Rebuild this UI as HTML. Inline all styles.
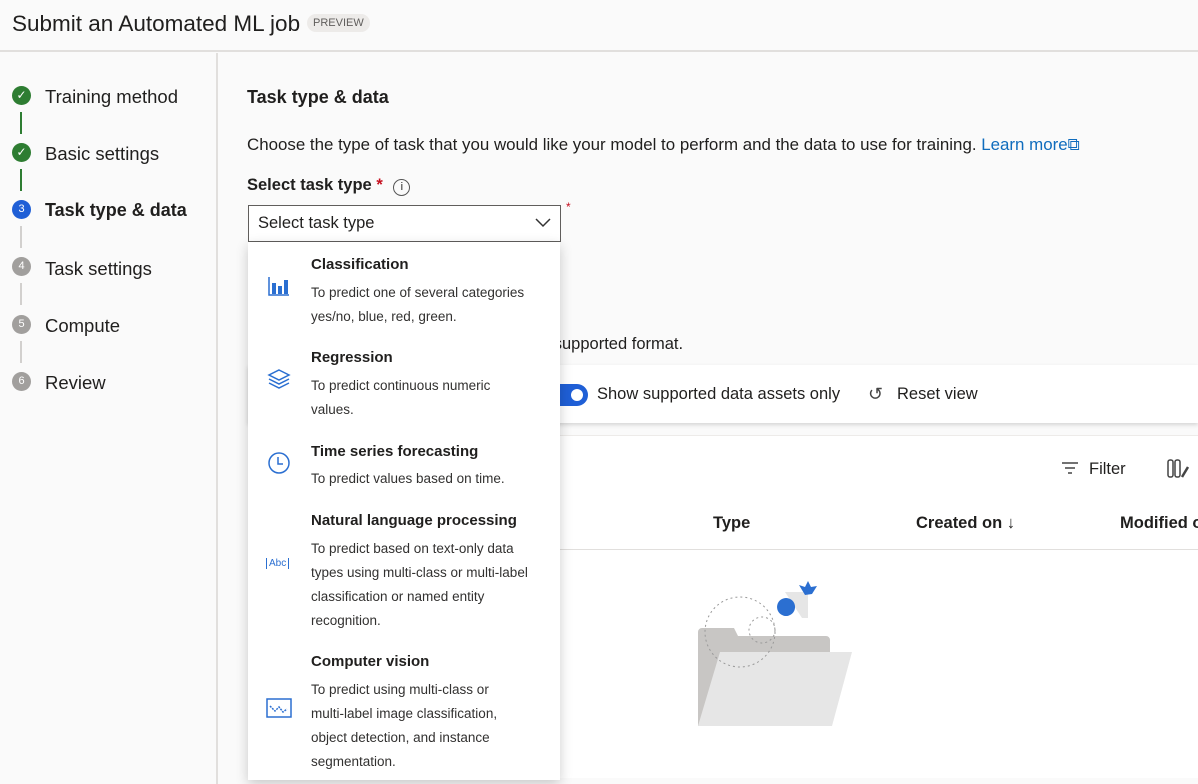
<!DOCTYPE html>
<html><head><style>
*{margin:0;padding:0;box-sizing:border-box}
body{width:1198px;height:784px;overflow:hidden;font-family:"Liberation Sans",sans-serif;color:#201f1e;background:#fafafa;position:relative}
.a{position:absolute}
.t{position:absolute;left:311px;font-weight:bold;font-size:15px;white-space:nowrap}
.d{position:absolute;left:311px;width:228px;font-size:13.5px;line-height:24px;color:#323130}
</style></head><body>
<div class="a" style="left:0;top:0;width:1198px;height:52px;background:#fafafa;border-bottom:2px solid #e1dfdd"></div>
<div class="a" style="left:12px;top:11px;font-size:22.5px;">Submit an Automated ML job</div>
<div class="a" style="left:307px;top:14px;background:#edebe9;border-radius:10px;padding:3px 6px;font-size:11px;color:#605e5c;">PREVIEW</div>
<div class="a" style="left:0;top:53px;width:218px;height:731px;background:#fafafa;border-right:2px solid #e1dfdd"></div>
<div class="a" style="left:12px;top:86px;width:19px;height:19px;border-radius:50%;background:#2e7d32;color:#fff;font-size:12px;text-align:center;line-height:19px">✓</div>
<div class="a" style="left:20px;top:112px;width:2px;height:22px;background:#2e7d32"></div>
<div class="a" style="left:12px;top:143px;width:19px;height:19px;border-radius:50%;background:#2e7d32;color:#fff;font-size:12px;text-align:center;line-height:19px">✓</div>
<div class="a" style="left:20px;top:169px;width:2px;height:22px;background:#2e7d32"></div>
<div class="a" style="left:12px;top:200px;width:19px;height:19px;border-radius:50%;background:#1f5fd6;color:#fff;font-size:11px;text-align:center;line-height:19px">3</div>
<div class="a" style="left:20px;top:226px;width:2px;height:22px;background:#d2d0ce"></div>
<div class="a" style="left:12px;top:257px;width:19px;height:19px;border-radius:50%;background:#a19f9d;color:#fff;font-size:11px;text-align:center;line-height:19px">4</div>
<div class="a" style="left:20px;top:283px;width:2px;height:22px;background:#d2d0ce"></div>
<div class="a" style="left:12px;top:315px;width:19px;height:19px;border-radius:50%;background:#a19f9d;color:#fff;font-size:11px;text-align:center;line-height:19px">5</div>
<div class="a" style="left:20px;top:341px;width:2px;height:22px;background:#d2d0ce"></div>
<div class="a" style="left:12px;top:372px;width:19px;height:19px;border-radius:50%;background:#a19f9d;color:#fff;font-size:11px;text-align:center;line-height:19px">6</div>
<div class="a" style="left:45px;top:86px;font-size:18.5px">Training method</div>
<div class="a" style="left:45px;top:143px;font-size:18.5px">Basic settings</div>
<div class="a" style="left:45px;top:200px;font-size:18px;font-weight:bold">Task type &amp; data</div>
<div class="a" style="left:45px;top:258px;font-size:18.5px">Task settings</div>
<div class="a" style="left:45px;top:315px;font-size:18.5px">Compute</div>
<div class="a" style="left:45px;top:372px;font-size:18.5px">Review</div>
<div class="a" style="left:247px;top:87px;font-size:18px;font-weight:bold">Task type &amp; data</div>
<div class="a" style="left:247px;top:135px;font-size:16.9px;white-space:nowrap">Choose the type of task that you would like your model to perform and the data to use for training. <span style="color:#0f6cbd">Learn more⧉</span></div>
<div class="a" style="left:247px;top:176px;font-size:16.5px;font-weight:bold">Select task type <span style="color:#c50f1f">*</span> <span style="display:inline-block;width:17px;height:17px;border:1.5px solid #555;border-radius:50%;font-size:11px;text-align:center;line-height:14px;font-weight:normal;margin-left:6px">i</span></div>
<div class="a" style="left:248px;top:205px;width:313px;height:37px;border:1.5px solid #605e5c;background:#fff;font-size:16.5px;padding:8px 9px">Select task type
<svg class="a" style="right:9px;top:12px" width="16" height="10"><path d="M1 1l7 7 7-7" stroke="#333" fill="none" stroke-width="1.5"/></svg></div>
<div class="a" style="left:566px;top:200px;color:#c50f1f;font-size:12px">*</div>
<div class="a" style="left:540px;top:335px;font-size:16.5px">n supported format.</div>
<div class="a" style="left:248px;top:365px;width:950px;height:58px;background:#fff;box-shadow:0 2px 4px rgba(0,0,0,.15)"></div>
<div class="a" style="left:540px;top:384px;width:48px;height:22px;border-radius:11px;background:#1f5fd6"><div class="a" style="right:5px;top:5px;width:12px;height:12px;border-radius:50%;background:#fff"></div></div>
<div class="a" style="left:597px;top:385px;font-size:16.5px">Show supported data assets only</div>
<div class="a" style="left:868px;top:384px;font-size:18px;color:#444">↺</div>
<div class="a" style="left:897px;top:385px;font-size:16.5px">Reset view</div>
<div class="a" style="left:248px;top:435px;width:950px;height:343px;background:#fff;border-top:1px solid #edebe9"></div>
<svg class="a" style="left:1061px;top:461px" width="18" height="14"><path d="M1 2h16M4 7h10M7 12h4" stroke="#444" stroke-width="1.5"/></svg>
<div class="a" style="left:1089px;top:460px;font-size:16.5px">Filter</div>
<svg class="a" style="left:1167px;top:459px" width="24" height="20"><rect x="1" y="1" width="5" height="17" rx="2" fill="none" stroke="#444" stroke-width="1.5"/><rect x="8" y="1" width="5" height="17" rx="2" fill="none" stroke="#444" stroke-width="1.5"/><path d="M15 18l6-10" stroke="#444" stroke-width="2.5"/></svg>
<div class="a" style="left:248px;top:549px;width:950px;height:1px;background:#e1dfdd"></div>
<div class="a" style="left:713px;top:514px;font-size:16.5px;font-weight:bold">Type</div>
<div class="a" style="left:916px;top:514px;font-size:16.5px;font-weight:bold">Created on <span style="font-weight:normal">↓</span></div>
<div class="a" style="left:1120px;top:514px;font-size:16.5px;font-weight:bold;white-space:nowrap">Modified o</div>
<svg class="a" style="left:690px;top:570px" width="170" height="160">
<path d="M8 62a4 4 0 0 1 4-4h32l4 8h88a4 4 0 0 1 4 4v86H8z" fill="#c8c6c4"/>
<path d="M30 82h132l-20 74H8z" fill="#e6e6e6"/>
<circle cx="50" cy="62" r="35" fill="none" stroke="#999" stroke-dasharray="2 3"/>
<circle cx="72" cy="60" r="13" fill="none" stroke="#999" stroke-dasharray="2 3"/>
<path d="M95 22h23v26h-6z" fill="#e6e6e6"/>
<path d="M96 28a9 9 0 1 0 0.1 0z" fill="#2b6fd1"/>
<path d="M115 25l-6-10 6 2 3-6 3 6 6-1-5 8z" fill="#2b6fd1"/>
</svg>
<div class="a" style="left:248px;top:242px;width:312px;height:538px;background:#fff;box-shadow:0 4px 12px rgba(0,0,0,.2)"></div>
<div class="t" style="top:256px">Classification</div>
<div class="d" style="top:281px">To predict one of several categories yes/no, blue, red, green.</div>
<div class="t" style="top:349px">Regression</div>
<div class="d" style="top:374px;width:215px">To predict continuous numeric values.</div>
<div class="t" style="top:443px">Time series forecasting</div>
<div class="d" style="top:467px">To predict values based on time.</div>
<div class="t" style="top:512px">Natural language processing</div>
<div class="d" style="top:537px;width:225px">To predict based on text-only data types using multi-class or multi-label classification or named entity recognition.</div>
<div class="t" style="top:653px">Computer vision</div>
<div class="d" style="top:678px;width:210px">To predict using multi-class or multi-label image classification, object detection, and instance segmentation.</div>
<svg class="a" style="left:267px;top:275px" width="24" height="22"><path d="M2 2v18h20" stroke="#2b6fd1" stroke-width="1.5" fill="none"/><rect x="5" y="8" width="4" height="11" fill="#2b6fd1"/><rect x="11" y="11" width="4" height="8" fill="#2b6fd1"/><rect x="17" y="5" width="4" height="14" fill="#2b6fd1"/></svg>
<svg class="a" style="left:267px;top:368px" width="24" height="22"><path d="M12 2l10 5-10 5-10-5zM2 11l10 5 10-5M2 15l10 5 10-5" stroke="#2b6fd1" stroke-width="1.5" fill="none"/></svg>
<svg class="a" style="left:267px;top:451px" width="24" height="24"><circle cx="12" cy="12" r="10" stroke="#2b6fd1" stroke-width="1.5" fill="none"/><path d="M11 6v7h5" stroke="#2b6fd1" stroke-width="1.5" fill="none"/></svg>
<div class="a" style="left:266px;top:558px;font-size:10px;color:#2b6fd1;border-left:1.5px solid #2b6fd1;border-right:1.5px solid #2b6fd1;padding:0 2px">Abc</div>
<svg class="a" style="left:266px;top:698px" width="26" height="20"><rect x="1" y="1" width="24" height="18" stroke="#2b6fd1" stroke-width="1.5" fill="none"/><path d="M4 8l5 5 4-4 4 5 4-3" stroke="#2b6fd1" stroke-width="1.5" fill="none" stroke-dasharray="2 1"/></svg>
</body></html>
